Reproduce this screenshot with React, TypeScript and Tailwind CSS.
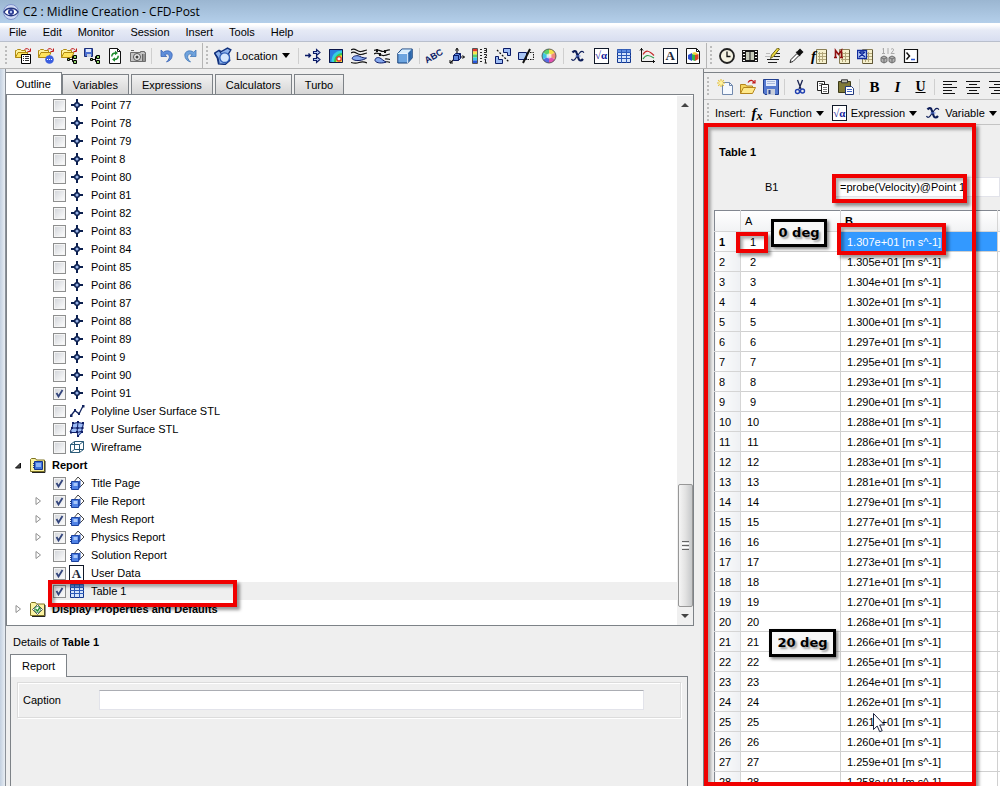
import type { ReactNode } from "react"
import clsx from "clsx"

const NAVY = "#0a1a66"

/* ---------- icons ---------- */

function Svg({ children, size = "h-4 w-4", box = "0 0 16 16" }: { children: ReactNode; size?: string; box?: string }) {
  return (
    <svg className={clsx(size, "shrink-0")} viewBox={box} fill="none" aria-hidden="true">
      {children}
    </svg>
  )
}

const folder = (
  <>
    <path d="M.5 9.500V2.500h1l1-1h3l1 1h4v2" fill="#fdf3a0" stroke="#b08a10" />
    <path d="M.5 9.500l2.500-5h10l-2.500 5z" fill="#ffe45c" stroke="#b08a10" />
    <path d="M9.500 1.500c2-1.500 4-1 5 1M15.500 .5v3h-3" stroke="#c01818" />
  </>
)

const tree = (
  <>
    <path d="M8.500 11.500h3M11.500 8.500v5M11.500 8.500h1M11.500 13.500h1" stroke="#000" />
    <path d="M6.500 10.500h2v2h-2zM12.500 7.500h3v3h-3zM12.500 12.500h3v3h-3z" fill="#8fd46a" stroke="#000" />
  </>
)

const calc = (
  <>
    <path d="M5.500 1.500h10v14h-10z" fill="#f6f0cc" stroke="#8a7f55" />
    <path d="M7 5.500h8M7 8.500h8M7 11.500h8M8.500 4v10M11.500 4v10" stroke="#b3a77a" />
    <path d="M15.500 2v13.500H6" stroke="#5e5636" />
  </>
)

const icons: Record<string, ReactNode> = {
  loadResults: (
    <>
      {folder}
      <path d="M6.500 6.500h9v9h-9z" fill="#fff" stroke="#000" />
      <path d="M8 8.500h1M10 8.500h4M8 10.500h1M10 10.500h4M8 12.500h1M10 12.500h4" stroke="#333" />
    </>
  ),
  loadState: (
    <>
      {folder}
      <circle cx="11.500" cy="11.500" r="4.300" fill="#3b5fe0" />
      <path d="M9 11.500h1M11 11.500h1M13 11.500h1" stroke="#fff" />
    </>
  ),
  openTree: (
    <>
      {folder}
      {tree}
    </>
  ),
  saveTree: (
    <>
      <path d="M.5.5h8v8h-8z" fill="#4a6fd0" stroke="#1d2f78" />
      <path d="M2 1h5v3H2z" fill="#dfe8fb" />
      <path d="M3 6h4v3H3z" fill="#c5cde0" />
      {tree}
    </>
  ),
  refresh: (
    <>
      <path d="M2.500.5h8l3 3v12h-11z" fill="#fff" stroke="#111" />
      <path d="M10.500.5v3h3" stroke="#111" />
      <path d="M4.800 8.500c0-2.500 1.500-3.500 4-3.500M11.200 7.800c0 2.500-1.500 3.700-4 3.700" stroke="#1d8a2c" strokeWidth="1.500" />
      <path d="M8 2.800v4.500l3-2.300zM8 9.200v4.500l-3-2.200z" fill="#1d8a2c" />
    </>
  ),
  camera: (
    <>
      <path d="M.5 4.500h10v-1h4v1h1v9h-15z" fill="#c3c3c3" stroke="#6d6d6d" />
      <circle cx="7" cy="9" r="3.500" fill="#eee" stroke="#555" />
      <circle cx="7" cy="9" r="1.500" fill="#444" />
      <path d="M12.500 6v7M14 6v7M1 2.500h3" stroke="#666" />
    </>
  ),
  undo: (
    <>
      <path d="M2 8.500V2l2.300 2.200C8 1.500 13.500 3 13.200 7.500c-.2 3.500-2.500 5.500-5.700 6.500 2-2 3.300-4 2.800-6-.4-2-2.500-2.400-4.600-1.400l2 1.900z" fill="#5f8fdb" stroke="#3a64b5" strokeWidth=".8" />
    </>
  ),
  redo: (
    <>
      <path d="M14 8.500V2l-2.300 2.200C8 1.500 2.500 3 2.800 7.500c.2 3.500 2.500 5.500 5.700 6.500-2-2-3.300-4-2.800-6 .4-2 2.500-2.400 4.600-1.400l-2 1.900z" fill="#6fa3dd" stroke="#4277b8" strokeWidth=".8" />
    </>
  ),
  location: (
    <>
      <path d="M.5 5.500l4-2.500 2 1L12 1l3 1.500-2 3.500 1 6-4 3.500-6-.5-1-5z" fill="#8db2ec" stroke="#10307c" strokeWidth="1.200" />
      <circle cx="9.500" cy="9.500" r="4.300" fill="#d3e5fc" stroke="#2f5fb8" strokeWidth="1.200" />
      <path d="M.5 5.500l3 4 1 5M4.500 3l2 3" stroke="#10307c" />
    </>
  ),
  vector: (
    <>
      <path d="M0 7.500h5M3.500 5.500l2 2-2 2" stroke={NAVY} strokeWidth="1.300" />
      <path d="M8.500 3.500h3v-2l3.500 3-3.500 3v-2h-3zM8.500 10.500h3v-2l3.500 3-3.500 3v-2h-3z" fill="#b8ccf5" stroke={NAVY} strokeWidth="1.100" />
    </>
  ),
  contour: (
    <>
      <path d="M1 1h14v14H1z" fill="#2c7de0" />
      <path d="M15 3C8 2 3 7 3.500 15H15z" fill="#35d0e0" />
      <path d="M15 5c-5-.5-9.500 4-9 10h9z" fill="#3fc34a" />
      <path d="M15 7c-4 0-7 3-7 8h7z" fill="#f2e63c" />
      <circle cx="11" cy="10.800" r="2.200" fill="#fff" stroke="#e0362a" strokeWidth="1.300" />
      <path d="M1.500 1.500h13v13h-13z" stroke="#0c1648" />
    </>
  ),
  streamline: (
    <>
      <path d="M0 2c4-3 6 2 10 1.500S14 2 16 2M0 5c4-3 6 2 10 1.500S14 5 16 5M0 14.500c4 1 5 1 8 0s5-1 8 .5" stroke="#111" strokeWidth="1.200" />
      <path d="M1 10.500c1-3 6-3.500 8-2 2 1 4 1.500 6.500 1.500-3 2.500-12 4-14.500.5z" fill="#86a9ee" stroke={NAVY} />
    </>
  ),
  particle: (
    <>
      <path d="M0 2.500c4-2 6 1 9 1s4-2 7-1.500M0 6c4-3 6 2 10 1.500S14 6 16 6M11 11c2-.5 3 0 5 .5M10 14.500c2-1 4-1 6 0" stroke="#111" strokeWidth="1.200" />
      <path d="M2 1h2v3H2zM10 2h2v3h-2zM5 5h2v3H5z" fill="#111" />
      <path d="M1 12.500c0-3 3-3.500 5-2.500 2 1 3 2.500 6 4-3 1.500-10 1.500-11-1.500z" fill="#86a9ee" stroke={NAVY} />
    </>
  ),
  cube: (
    <>
      <path d="M.8 5.500l4-4.500h10.400v9l-4.500 5H.8z" fill="#6da5e0" stroke="#123c78" />
      <path d="M1.300 5.500L5 1.500h9.500l-3.800 4z" fill="#d8ecfb" />
      <path d="M10.700 5.500l4-4v8.300l-4 4.700z" fill="#2d67ab" />
      <path d="M1 5.500h9.700V15" stroke="#e8f4ff" />
    </>
  ),
  coord: (
    <>
      <path d="M8 6V1M10 9h5.500M5.500 11L1 15" stroke="#111" strokeWidth="1.200" />
      <path d="M6.500 2.500L8 0l1.500 2.500M13.500 7.500l2 1.500-2 1.500M1 12v3h3" stroke="#111" />
      <path d="M4.500 7.500l2-2h5v5l-2 2h-5z" fill="#5c85dc" stroke={NAVY} />
      <path d="M4.500 7.500h5v5M9.500 7.500l2-2" stroke={NAVY} />
    </>
  ),
  legend: (
    <>
      <path d="M1 .5h4v3H1z" fill="#e8352c" />
      <path d="M1 3.500h4v3H1z" fill="#f7e64a" />
      <path d="M1 6.500h4v3H1z" fill="#58d46b" />
      <path d="M1 9.500h4v3H1z" fill="#37c8ee" />
      <path d="M1 12.500h4v3H1z" fill="#2956d8" />
      <path d="M.5.5h5v15h-5z" stroke="#555" />
      <path d="M8 1.500h2M8 4.500h2M8 7.500h2M8 10.500h2M8 13.500h2" stroke="#222" />
      <path d="M12 .5h2.500v2H12.500h2v2H12M12 6.500h2.500v1.500L12.500 9.500H15M13.500 11v4M12.500 11.500h1M12.500 15h2.500" stroke="#222" />
    </>
  ),
  transform: (
    <>
      <path d="M8.500.5h7v7h-3v-3h-4zM.5 8.500h3v3h4v4h-7z" fill="#9dbcf4" stroke={NAVY} />
      <path d="M2 2l12 12" stroke="#111" strokeWidth="1.300" strokeDasharray="2 1.500" />
    </>
  ),
  clip: (
    <>
      <path d="M.5 4.500h8v7h-8z" fill="#a9c6f5" stroke={NAVY} />
      <path d="M9.500 4.500h6v7h-8" stroke="#111" strokeDasharray="1.500 1" />
      <path d="M12 1L5 15" stroke="#111" strokeWidth="2" />
    </>
  ),
  wheel: (
    <>
      <circle cx="8" cy="8" r="7" fill="#fff" />
      <path d="M8 8V1a7 7 0 0 1 6 3.500z" fill="#f5e04a" />
      <path d="M8 8l6-3.500a7 7 0 0 1 0 7z" fill="#f08a7a" />
      <path d="M8 8l6 3.500A7 7 0 0 1 8 15z" fill="#e052b0" />
      <path d="M8 8v7a7 7 0 0 1-6-3.500z" fill="#5a68e0" />
      <path d="M8 8l-6 3.500a7 7 0 0 1 0-7z" fill="#3fc6e4" />
      <path d="M8 8L2 4.500A7 7 0 0 1 8 1z" fill="#5cd069" />
      <circle cx="8" cy="8" r="2.500" fill="#fff" opacity=".7" />
      <circle cx="8" cy="8" r="7" stroke="#444" strokeWidth=".8" />
    </>
  ),
  variable: (
    <>
      <path d="M2.500 4.500c1.500-2 3.700-1.700 4.200.5l2 6c.7 2 2.800 2 4.300 0" stroke="#0c1c58" strokeWidth="2.200" />
      <path d="M13.800 4.800c-.8-2.300-3-1.800-4.300.2l-4 5.500c-1.200 2-3 2.500-4 .5" stroke="#0c1c58" strokeWidth="1.200" />
      <path d="M5.500 8h5" stroke="#5b78d8" />
    </>
  ),
  table: (
    <>
      <path d="M1.500 1.500h13v13h-13z" fill="#d4e4fb" stroke="#12348a" />
      <path d="M1.500 1.500h13v3h-13z" fill="#5c8be0" />
      <path d="M1 4.500h14M1 7.500h14M1 10.500h14M5.500 1v14M10.500 1v14" stroke="#2c5ab8" />
    </>
  ),
  chart: (
    <>
      <path d="M2.500 0v13.500H16M1 2.500L2.500.5 4 2.500M14 12l1.500 1.500L14 15" stroke="#111" />
      <path d="M4 6.500c3-5 6-4 11 1" stroke="#c22a2a" strokeWidth="1.200" />
      <path d="M4 11c3-5 6-4 11-1" stroke="#2a9a4a" strokeWidth="1.200" />
    </>
  ),
  figure: (
    <>
      <path d="M1.500.5h10l3 3v12h-13z" fill="#fff" stroke="#111" />
      <path d="M11.500.5v3h3" stroke="#111" />
      <path d="M3 7l4-2v8l-4-2z" fill="#2b4fd0" />
      <path d="M7 5l3-1 3 2-3 2z" fill="#f0d536" />
      <path d="M7 6l3 1v6l-3-1z" fill="#35b548" />
      <path d="M10 7l3.500-1v5L10 13z" fill="#d8452a" />
    </>
  ),
  clock: (
    <>
      <circle cx="8" cy="8" r="7" fill="#f4f2e2" stroke="#222" strokeWidth="1.800" />
      <path d="M8 3.500v5h3.500" stroke="#111" strokeWidth="1.300" />
    </>
  ),
  film: (
    <>
      <path d="M0 2h16v12H0z" fill="#1a1a1a" />
      <path d="M4 4h3.500v8H4zM8.500 4H12v8H8.500z" fill="#c6cbbb" />
      <path d="M1 3.500h2M1 6.500h2M1 9.500h2M1 12.500h2M13 3.500h2M13 6.500h2M13 9.500h2M13 12.500h2" stroke="#fff" />
    </>
  ),
  edit: (
    <>
      <path d="M1 5.500h4M0 8.500h5" stroke="#bbb" />
      <path d="M2 11.500h12M3 14.500h9M9 8.500h6M11 5.500h4" stroke="#222" />
      <path d="M14.500 1l-6 7.500-3 2 1-3.500 6-7z" fill="#f0dc3c" stroke="#6f6420" />
    </>
  ),
  dropper: (
    <>
      <path d="M2 14.500l1-3 6-6 2 2-6 6z" fill="#fff" stroke="#222" />
      <path d="M7.500 4l1.500-.5 3-3 3.500 3.500-3 3-.5 1.500z" fill="#111" />
    </>
  ),
  calcF: calc,
  calcM: (
    <>
      {calc}
      <path d="M1.500 9.500V2.500l3 4 3-4v7M0 9.500h3M6 9.500h3" stroke="#8f1010" strokeWidth="1.600" />
    </>
  ),
  calcX: (
    <>
      {calc}
      <path d="M.5 2.500h9v8h-9z" fill="#bcd0fa" stroke="#122c9c" strokeWidth="1.300" />
      <path d="M2 4l6 5M8 4l-6 5M3 4h4" stroke="#122c9c" strokeWidth="1.300" />
    </>
  ),
  compare: (
    <>
      <path d="M3.500 0v5M2.500 1h1M2 5.500h3M8 0v6M11 1.500c1-1.500 3-1 2.500.8L11 5.500h3.500" stroke="#aaa" />
      <path d="M1 9.500l3-1.500 3 1.500v4L4 15l-3-1.500zM9 9.500l3-1.500 3 1.500v4L12 15l-3-1.500z" fill="#b3b3b3" stroke="#6c6c6c" />
      <path d="M1 9.500L4 11l3-1.500M4 11v4M9 9.500l3 1.500 3-1.500M12 11v4" stroke="#6c6c6c" />
    </>
  ),
  command: (
    <>
      <path d="M1.500 1.500h13v13h-13z" fill="#fff" stroke="#111" strokeWidth="1.200" />
      <path d="M3.500 4.500l3 3.500-3 3.500" stroke="#111" strokeWidth="1.500" />
      <path d="M8 11.500h4" stroke="#2a55d0" strokeWidth="1.500" />
    </>
  ),
  newFile: (
    <>
      <path d="M5.500 3.500h7l3 3v9h-10z" fill="#f5f9ff" stroke="#7088ad" />
      <path d="M12.500 3.500v3h3" stroke="#7088ad" />
      <path d="M4 0v8M0 4h8M1.200 1.200l5.600 5.600M6.800 1.200L1.200 6.800" stroke="#e6c035" strokeWidth="1.100" />
      <circle cx="4" cy="4" r="2" fill="#fff3a0" />
    </>
  ),
  openFile: (
    <>
      <path d="M.5 14.500v-9h5l1 1.500h6v2" fill="#f5d45c" stroke="#b5851c" />
      <path d="M.5 14.500l3-6h12l-3 6z" fill="#ffe98a" stroke="#b5851c" />
      <path d="M8 3.500c2-3 5-2.500 6 0M15 1v3h-3" stroke="#c01818" strokeWidth="1.200" />
    </>
  ),
  save: (
    <>
      <path d="M.5.5h15v15H2l-1.500-1.500z" fill="#5579cf" stroke="#223f8f" />
      <path d="M3 1h10v6H3z" fill="#e3ebfb" />
      <path d="M4 2.500h8M4 4.500h8" stroke="#a9b9dd" />
      <path d="M4 10h8v6H4z" fill="#c8ceda" />
      <path d="M5.500 11h2v4h-2z" fill="#2c4590" />
    </>
  ),
  cut: (
    <>
      <path d="M5.500 1l3.500 9M10.500 1L7 10" stroke="#1b2450" strokeWidth="1.300" />
      <circle cx="5.500" cy="12.500" r="2" stroke="#1f3fb0" strokeWidth="1.400" />
      <circle cx="10.500" cy="12" r="2" stroke="#1f3fb0" strokeWidth="1.400" />
    </>
  ),
  copy: (
    <>
      <path d="M2.500 2.500h7v9h-7z" fill="#fff" stroke="#222" />
      <path d="M6.500 5.500h7v9h-7z" fill="#fff" stroke="#222" />
      <path d="M8 8.500h4M8 10.500h4M8 12.500h4M4 4.500h4M4 6.500h2" stroke="#777" />
    </>
  ),
  paste: (
    <>
      <path d="M.5 2.500h12v11H.5z" fill="#807a38" stroke="#3c3a18" />
      <path d="M3.500.8h6v3h-6z" fill="#bfc0b5" stroke="#333" />
      <path d="M7.500 7.500h6l2 2v6h-8z" fill="#fff" stroke="#22387a" />
      <path d="M9 10.500h5M9 12.500h5" stroke="#4468c4" />
    </>
  ),
  alignLeft: <path d="M1 2.500h14M1 5.500h9M1 8.500h14M1 11.500h9M1 14.500h12" stroke="#111" />,
  alignCenter: <path d="M1 2.500h14M4 5.500h8M1 8.500h14M4 11.500h8M2 14.500h12" stroke="#111" />,
  alignRight: <path d="M1 2.500h14M6 5.500h9M1 8.500h14M6 11.500h9M3 14.500h12" stroke="#111" />,
  point: (
    <>
      <path d="M8 2v12M2 8h12" stroke="#0b1f4f" strokeWidth="2" />
      <circle cx="8" cy="8" r="2.300" fill="#9db7ea" stroke="#0b1f4f" strokeWidth="1.500" />
    </>
  ),
  polyline: (
    <>
      <path d="M2 12.500l4-5 4 3.500 4-8" stroke="#12245f" strokeWidth="1.300" />
      <path d="M1 11.500h2.500V14H1zM5 6h2v2.500H5zM9 9.500h2V12H9zM13 2h2.500v2.500H13z" fill="#12245f" />
    </>
  ),
  surface: (
    <>
      <path d="M4 2l4-1 7 1-1 6v3l-4 4-2-4H1l2-5z" fill="#9dbcf7" />
      <path d="M4 2.500l5-1 5 1M2 7h12M1.500 11.500H8l4-1M4 2L3 7l-2 4M9 1.500L8 11M14.500 2l-2 9M8 11l1 4 3.500-4" stroke="#0e1d66" />
      <path d="M3 1h2v2H3zM8 0h2v2H8zM13 1h2v2h-2zM1 10.500h2v2H1zM7 10h2v2H7zM8 14h2v2H8zM12 10h2v2h-2zM12.500 6h2v2h-2zM2 6h2v2H2zM7.500 6h2v2h-2z" fill="#0e1d66" />
    </>
  ),
  wireframe: (
    <>
      <path d="M1.500 5.500l4-3h9v8l-4 3h-9zM1.500 5.500h9v8M10.500 5.500l4-3M5.500 2.500v8h9M5.500 10.500l-4 3" stroke="#2a5b78" />
    </>
  ),
  reportPage: (
    <>
      <path d="M9 2l6 6-6 6-5-6z" fill="#fff" stroke="#444" />
      <path d="M2.500 6.500h7v8h-7z" fill="#4f82e6" stroke="#1c429e" />
      <path d="M4.500 8h4v3h-4z" fill="#a9c8fb" />
      <path d="M9.500 6.500l2-1.500v7l-2 2.500" fill="#2a56b8" />
      <path d="M1 8.500h2M1 10.500h2M1 12.500h2" stroke="#183a92" />
    </>
  ),
  reportFolder: (
    <>
      <path d="M.5 14.500v-12l1-1h4l1 1.500h8v11.500z" fill="#fbf3a2" stroke="#7c7222" />
      <path d="M15 4v11.500H2" stroke="#222" />
      <path d="M4.500 4.500h8v8h-8z" fill="#3f74dc" stroke="#16338c" />
      <path d="M6 6h5v4H6z" fill="#8ab2f7" />
      <path d="M3 6.500h2M3 8.500h2M3 10.500h2" stroke="#16338c" />
    </>
  ),
  displayFolder: (
    <>
      <path d="M.5 14.500v-12l1-1h4l1 1.500h8v11.500z" fill="#fbf3a2" stroke="#7c7222" />
      <path d="M15 4v11.500H2" stroke="#222" />
      <path d="M7.500 3.500l5 5-5 5-5-5z" fill="#fff" stroke="#556" />
      <circle cx="7.500" cy="8.500" r="3" fill="#fff" stroke="#3c8f46" />
      <path d="M5.500 8l2 2L10 6.500" stroke="#1d8a2c" strokeWidth="1.400" />
    </>
  ),
}

// icons that carry a letter get real text over the drawing
function LetterPage() {
  return (
    <span className="flex h-4 w-[15px] items-center justify-center border border-gray-900 bg-white font-['Liberation_Serif',serif] text-[13px] leading-none font-bold text-gray-800">
      A
    </span>
  )
}

function RootAlpha() {
  return (
    <span className="flex h-4 w-[15px] items-center justify-center border border-gray-900 bg-white font-['Liberation_Serif',serif] text-[11px] leading-none font-bold text-[#12209a]">
      √α
    </span>
  )
}

function Glyph({ name }: { name: string }) {
  switch (name) {
    case "text":
      return <LetterPage />
    case "expression":
      return <RootAlpha />
    case "label":
      return <span className="-rotate-30 text-[9px] font-black text-[#0a1a66]">ABC</span>
    case "bold":
      return <span className="font-['Liberation_Serif',serif] text-[15px] font-black">B</span>
    case "italic":
      return <span className="font-['Liberation_Serif',serif] text-[15px] font-bold italic">I</span>
    case "underline":
      return <span className="font-['Liberation_Serif',serif] text-[14px] font-bold underline">U</span>
    case "calcF":
      return (
        <span className="relative flex">
          <Svg>{icons.calcF}</Svg>
          <span className="absolute top-0 left-0 font-['Liberation_Serif',serif] text-[15px] leading-4 font-bold italic">f</span>
        </span>
      )
    case "fx":
      return (
        <span className="flex w-[14px] items-center font-['Liberation_Serif',serif] text-[15px] leading-4 font-bold italic">
          f<span className="pt-[5px] text-[12px]">x</span>
        </span>
      )
    default:
      return <Svg>{icons[name]}</Svg>
  }
}

/* ---------- toolbar parts ---------- */

function ToolButton({ name }: { name: string }) {
  return (
    <button type="button" aria-label={name} className="flex h-6 w-[23px] shrink-0 items-center justify-center">
      <Glyph name={name} />
    </button>
  )
}

function Separator() {
  return <div className="mr-[3px] ml-[2px] h-4 w-px shrink-0 bg-[#cfcfcf]" />
}

function Handle() {
  return <div className="mr-1 ml-[3px] h-5 w-[2px] shrink-0 bg-[repeating-linear-gradient(#bcbcbc_0_2px,transparent_2px_4px)]" />
}

function Caret() {
  return <span className="h-0 w-0 shrink-0 border-x-4 border-t-[5px] border-x-transparent border-t-black" />
}

function Tools({ groups }: { groups: string[][] }) {
  return (
    <>
      {groups.map((group, i) => (
        <div key={i} className="flex shrink-0 items-center">
          {i > 0 && <Separator />}
          {group.map((name) => (
            <ToolButton key={name} name={name} />
          ))}
        </div>
      ))}
    </>
  )
}

const fileTools = [
  ["loadResults", "loadState", "openTree", "saveTree", "refresh", "camera"],
  ["undo", "redo"],
]

const insertTools = [
  ["vector", "contour", "streamline", "particle", "cube"],
  ["label", "coord", "legend", "transform", "clip", "wheel"],
  ["variable", "expression", "table", "chart", "text", "figure"],
]

const extraTools = [["clock", "film", "edit", "dropper", "calcF", "calcM", "calcX", "compare", "command"]]

const tableTools = [
  ["newFile", "openFile", "save"],
  ["cut", "copy", "paste"],
  ["bold", "italic", "underline"],
  ["alignLeft", "alignCenter", "alignRight"],
]

const menus = ["File", "Edit", "Monitor", "Session", "Insert", "Tools", "Help"]

/* ---------- annotations ---------- */

function RedBox({ className }: { className: string }) {
  return (
    <div
      className={clsx(
        "pointer-events-none absolute z-10 border-4 border-[#f00000] shadow-[3px_3px_3px_rgba(0,0,0,0.4),inset_3px_3px_3px_rgba(0,0,0,0.3)]",
        className
      )}
    />
  )
}

function DegreeNote({ text, className }: { text: string; className: string }) {
  return (
    <div
      className={clsx(
        "absolute z-10 flex h-7 items-center justify-center border-[3px] border-black bg-[#f7f7f7] font-['DejaVu_Sans',sans-serif] text-[13px] font-bold whitespace-nowrap shadow-[2px_2px_3px_rgba(0,0,0,0.5)] [text-shadow:2px_2px_2px_rgba(0,0,0,0.35)]",
        className
      )}
    >
      {text}
    </div>
  )
}

/* ---------- outline tree ---------- */

interface TreeItem {
  label: string
  icon: string
  checked?: boolean
  expander?: "open" | "closed"
  root?: boolean
  selected?: boolean
}

const pointNames = ["77", "78", "79", "8", "80", "81", "82", "83", "84", "85", "86", "87", "88", "89", "9", "90", "91"]

const treeItems: TreeItem[] = [
  ...pointNames.map((n) => ({ label: `Point ${n}`, icon: "point", checked: n === "91" })),
  { label: "Polyline User Surface STL", icon: "polyline" },
  { label: "User Surface STL", icon: "surface" },
  { label: "Wireframe", icon: "wireframe" },
  { label: "Report", icon: "reportFolder", root: true, expander: "open" },
  { label: "Title Page", icon: "reportPage", checked: true },
  { label: "File Report", icon: "reportPage", checked: true, expander: "closed" },
  { label: "Mesh Report", icon: "reportPage", checked: true, expander: "closed" },
  { label: "Physics Report", icon: "reportPage", checked: true, expander: "closed" },
  { label: "Solution Report", icon: "reportPage", expander: "closed" },
  { label: "User Data", icon: "text", checked: true },
  { label: "Table 1", icon: "table", checked: true, selected: true },
  { label: "Display Properties and Defaults", icon: "displayFolder", root: true, expander: "closed" },
]

function Expander({ state }: { state?: "open" | "closed" }) {
  return (
    <span className="flex w-4 shrink-0 justify-center">
      {state === "open" && (
        <Svg size="h-2 w-2" box="0 0 8 8">
          <path d="M6.500 2v5h-5z" fill="#444" stroke="#111" />
        </Svg>
      )}
      {state === "closed" && (
        <Svg size="h-2 w-2" box="0 0 8 8">
          <path d="M2 .5L6.500 4 2 7.500z" fill="#fff" stroke="#8f8f8f" />
        </Svg>
      )}
    </span>
  )
}

function TreeRow({ item }: { item: TreeItem }) {
  return (
    <li
      className={clsx(
        "relative flex h-[18px] items-center",
        item.root ? "pl-[3px]" : "pl-[23px]",
        item.selected && "bg-[linear-gradient(90deg,transparent_46px,#efefef_46px)]"
      )}
    >
      <Expander state={item.expander} />
      {item.root ? (
        <span className="flex items-center gap-[6px] pl-1 font-bold">
          <Glyph name={item.icon} />
          {item.label}
        </span>
      ) : (
        <label className="flex items-center pl-[7px]">
          <span className="relative flex">
            <input
              type="checkbox"
              defaultChecked={item.checked}
              className="peer h-[13px] w-[13px] appearance-none border border-[#8e8f8f] bg-linear-to-br from-[#d0d3d8] to-white shadow-[inset_0_0_0_1px_#f4f4f4]"
            />
            <svg
              className="pointer-events-none absolute inset-0 hidden h-[13px] w-[13px] peer-checked:block"
              viewBox="0 0 13 13"
              fill="none"
            >
              <path d="M3.500 6l2 3.500L9.500 3" stroke="#33457c" strokeWidth="1.800" />
            </svg>
          </span>
          <span className="flex w-[25px] justify-start pl-[3px]">
            <Glyph name={item.icon} />
          </span>
          {item.label}
        </label>
      )}
      {item.selected && <RedBox className="-top-[2px] left-[41px] h-[27px] w-[189px]" />}
    </li>
  )
}

function ScrollBar() {
  return (
    <div className="flex w-4 shrink-0 flex-col items-center bg-[#f0f0f0]">
      <span className="mt-[7px] h-0 w-0 border-x-4 border-b-4 border-x-transparent border-b-[#444]" />
      <div className="flex-1" />
      <div className="flex h-[123px] w-[15px] flex-col items-center justify-center gap-px rounded-xs border border-[#979797] bg-linear-to-r from-[#f5f5f5] via-[#e2e2e2] to-[#c6c8ca]">
        <span className="h-px w-[7px] bg-[#666]" />
        <span className="h-px w-[7px] bg-white" />
        <span className="h-px w-[7px] bg-[#666]" />
        <span className="h-px w-[7px] bg-white" />
        <span className="h-px w-[7px] bg-[#666]" />
      </div>
      <span className="mt-[7px] mb-[7px] h-0 w-0 border-x-4 border-t-4 border-x-transparent border-t-[#444]" />
    </div>
  )
}

const tabs = ["Outline", "Variables", "Expressions", "Calculators", "Turbo"]

function OutlinePanel() {
  return (
    <section className="flex w-[69%] shrink-0 grow-0 flex-col border-l border-[#8b9199] bg-[#efefef] pr-px">
      <div role="tablist" className="flex items-end pt-[3px]">
        {tabs.map((tab, i) => (
          <button
            key={tab}
            type="button"
            role="tab"
            aria-selected={i === 0}
            className={clsx(
              "border-[#7d8287]",
              i === 0
                ? "h-[22px] border-t border-r bg-white px-[10px]"
                : "mr-[2px] h-5 border-t border-r border-l bg-linear-to-b from-[#f2f2f2] to-[#d6d6d6] px-[10px]"
            )}
          >
            {tab}
          </button>
        ))}
      </div>
      <div className="flex border border-[#7d8287] bg-white pt-px">
        <ul className="min-w-0 flex-1 overflow-hidden pb-[7px]">
          {treeItems.map((item) => (
            <TreeRow key={item.label} item={item} />
          ))}
        </ul>
        <ScrollBar />
      </div>
      <p className="px-[7px] pt-2 pb-1 leading-4">
        Details of <b>Table 1</b>
      </p>
      <div className="flex min-h-0 flex-1 flex-col pr-[6px] pl-1">
        <button
          type="button"
          role="tab"
          className="relative z-10 -mb-px h-[23px] self-start border border-b-0 border-[#7d8287] bg-white px-[11px]"
        >
          Report
        </button>
        <div className="flex-1 border-x border-t border-[#7d8287] px-[6px] pt-[5px]">
          <div className="flex h-9 items-center border border-[#dcdcdc] pr-9 pl-[5px] shadow-[inset_1px_1px_0_#fff,1px_1px_0_#fff]">
            <label htmlFor="caption" className="w-[76px]">
              Caption
            </label>
            <input
              id="caption"
              type="text"
              className="h-5 min-w-0 flex-1 border border-[#e2e3ea] border-t-[#abadb3] bg-white px-1"
            />
          </div>
        </div>
      </div>
    </section>
  )
}

/* ---------- table viewer ---------- */

const velocities = [
  "1.307", "1.305", "1.304", "1.302", "1.300", "1.297", "1.295", "1.293", "1.290", "1.288",
  "1.286", "1.283", "1.281", "1.279", "1.277", "1.275", "1.273", "1.271", "1.270", "1.268",
  "1.266", "1.265", "1.264", "1.262", "1.261", "1.260", "1.259", "1.258",
]

function Pointer() {
  return (
    <svg className="absolute top-px left-8 z-20 h-5 w-3" viewBox="0 0 12 20" fill="none">
      <path d="M.5.5v16l3.700-3.500 2.500 5.700 2.500-1-2.500-5.700h4.800z" fill="#fff" stroke="#1c2340" />
    </svg>
  )
}

function DataTable() {
  return (
    <table className="w-full table-fixed border-collapse border-t border-l border-[#828790] bg-white">
      <colgroup>
        <col className="w-[26px]" />
        <col className="w-[100px]" />
        <col className="w-[157px]" />
        <col />
      </colgroup>
      <thead>
        <tr className="h-[21px] bg-linear-to-b from-white to-[#f1f2f4] text-left">
          <td className="border-r border-b border-[#d5d5d5]" />
          <th className="border-r border-b border-[#d5d5d5] p-0 pl-1 font-normal">A</th>
          <th className="border-r border-b border-[#d5d5d5] p-0 pl-1 font-bold">B</th>
          <td className="border-b border-[#d5d5d5]" />
        </tr>
      </thead>
      <tbody>
        {velocities.map((value, i) => (
          <tr key={value} className="h-5">
            <th
              className={clsx(
                "border-r border-b border-[#d5d5d5] bg-linear-to-r from-white to-[#eef0f3] p-0 pl-1 text-left leading-4",
                i === 0 ? "font-bold" : "font-normal"
              )}
            >
              {i + 1}
            </th>
            <td className="relative border-r border-b border-[#d0d0d0] p-0 pl-[6px] leading-4">
              <span className="inline-block w-3 text-center">{i + 1}</span>
              {i === 0 && <RedBox className="top-0 -left-[5px] h-[21px] w-8" />}
              {i === 0 && <DegreeNote text="0 deg" className="-top-[13px] left-[30px] w-14" />}
              {i === 20 && <DegreeNote text="20 deg" className="-top-[3px] left-7 w-[67px]" />}
            </td>
            <td
              className={clsx(
                "relative border-r border-b border-[#d0d0d0] p-0 pl-[6px] leading-4 whitespace-nowrap",
                i === 0 && "bg-[#3399ff] text-white"
              )}
            >
              {value}e+01 [m s^-1]
              {i === 0 && <RedBox className="-top-[9px] -left-1 h-8 w-[109px]" />}
              {i === 24 && <Pointer />}
            </td>
            <td className="border-b border-[#d0d0d0]" />
          </tr>
        ))}
      </tbody>
    </table>
  )
}

const inserts = [
  { label: "Function", icon: "fx" },
  { label: "Expression", icon: "expression" },
  { label: "Variable", icon: "variable" },
]

function TablePanel() {
  return (
    <section className="relative ml-2 flex min-w-0 flex-1 flex-col overflow-hidden border-l border-[#7d8287]">
      <div className="mt-[3px] flex h-7 items-center border-t border-b border-t-[#7d8287] border-b-[#c4c4c4] pt-[2px]">
        <Handle />
        <Tools groups={tableTools} />
      </div>
      <div className="flex h-[25px] items-center overflow-hidden border-b border-[#c4c4c4] pt-[2px]">
        <Handle />
        <span className="pl-[2px]">Insert:</span>
        {inserts.map((item) => (
          <button key={item.label} type="button" className="flex shrink-0 items-center gap-1 pr-[2px] pl-[6px]">
            <Glyph name={item.icon} />
            {item.label}
            <Caret />
          </button>
        ))}
      </div>
      <div className="relative flex min-h-0 flex-1 flex-col overflow-hidden">
        <h2 className="pt-[19px] pl-[15px] leading-4 font-bold">Table 1</h2>
        <div className="flex items-center pt-[17px] pb-[13px] pl-[61px]">
          <label htmlFor="cell" className="w-[68px]">
            B1
          </label>
          <div className="relative flex-1">
            <input
              id="cell"
              type="text"
              defaultValue="=probe(Velocity)@Point 1"
              className="block h-5 w-full border border-[#e2e3ea] bg-white px-[6px]"
            />
            <RedBox className="-top-[3px] -left-px h-[29px] w-[135px]" />
          </div>
        </div>
        <div className="pl-[10px]">
          <DataTable />
        </div>
      </div>
      <RedBox className="top-[54px] bottom-0 left-0 w-[272px]" />
    </section>
  )
}

export default function App() {
  return (
    <div className="flex h-screen flex-col overflow-hidden bg-[#efefef] font-['Liberation_Sans',Arial,sans-serif] text-[11px] leading-4 text-black">
      <header className="flex h-[23px] shrink-0 items-center gap-1 bg-linear-to-b from-[#9bb6d1] to-[#b4cfea] pl-[3px] font-['Open_Sans',sans-serif] text-[12px]">
        <Svg>
          <circle cx="8" cy="8" r="7.500" fill="#cfd9f3" stroke="#7f93cc" />
          <path d="M1 8c3-5 11-5 14 0-3 5-11 5-14 0z" fill="#fff" stroke="#23347f" strokeWidth="1.300" />
          <circle cx="8" cy="8" r="3" fill="#2c3c94" />
          <circle cx="8" cy="8" r="1.200" fill="#b8c8f5" />
        </Svg>
        <h1>C2 : Midline Creation - CFD-Post</h1>
      </header>
      <nav className="flex h-[19px] shrink-0 items-center border-b border-[#b9bfcc] bg-linear-to-b from-white from-10% via-[#e6eaf6] via-40% to-[#d8def0] pl-px">
        {menus.map((menu) => (
          <button key={menu} type="button" className="px-2">
            {menu}
          </button>
        ))}
      </nav>
      <div className="flex h-[27px] shrink-0 items-center overflow-hidden border-b border-[#b5b5b5] pt-px pl-[2px]">
        <Handle />
        <Tools groups={fileTools} />
        <div className="ml-px flex h-full shrink-0 items-center border-l border-[#b5b5b5]">
          <Handle />
          <button type="button" className="flex items-center gap-1 pr-[6px] pl-[2px]">
            <Svg size="h-[18px] w-[18px]">{icons.location}</Svg>
            Location
            <Caret />
          </button>
          <Separator />
          <Tools groups={insertTools} />
        </div>
        <div className="ml-px flex h-full shrink-0 items-center border-l border-[#b5b5b5]">
          <Handle />
          <Tools groups={extraTools} />
        </div>
      </div>
      <main className="flex min-h-0 flex-1">
        <div className="w-[5px] shrink-0 bg-linear-to-r from-[#c3d0e0] to-[#e8edf3]" />
        <OutlinePanel />
        <TablePanel />
      </main>
    </div>
  )
}
